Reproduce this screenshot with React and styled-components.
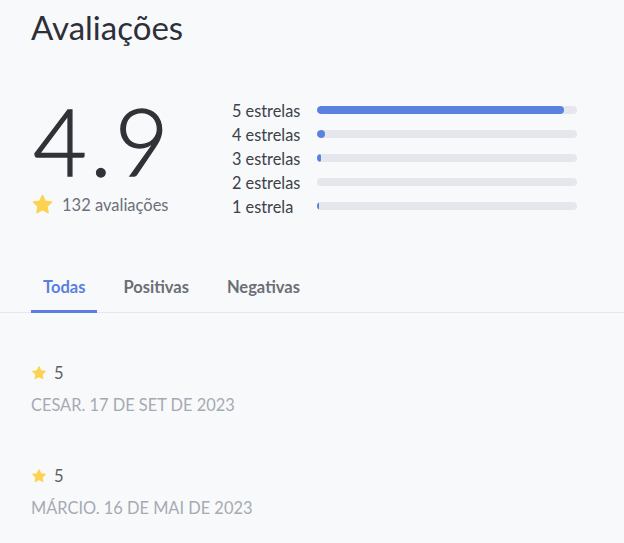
import React, { useState } from "react"
import styled, { createGlobalStyle } from "styled-components"

const GlobalStyle = createGlobalStyle`
  html, body {
    margin: 0;
    padding: 0;
    background: #f8f9fb;
  }
  body {
    font-family: "Lato", "Liberation Sans", sans-serif;
    color: #2f3237;
  }
`

const Page = styled.div`
  width: 624px;
  min-height: 543px;
  padding-top: 8px;
  box-sizing: border-box;
  overflow: hidden;
`

const Title = styled.h1`
  margin: 0 0 0 31px;
  font-size: 33px;
  font-weight: 400;
  line-height: 1.2;
  color: #2c3038;
`

const Summary = styled.section`
  display: flex;
  margin: 46px 0 0 31px;
`

const ScoreColumn = styled.div`
  width: 201px;
  display: flex;
  flex-direction: column;
`

const Score = styled.div`
  padding-left: 2px;
  font-size: 93px;
  line-height: 1;
  font-weight: 300;
  color: #2f3237;
  -webkit-text-stroke: 1.3px #2f3237;
  letter-spacing: 3px;
`

const CountRow = styled.div`
  display: flex;
  align-items: center;
  gap: 8px;
  margin-top: 8px;
  height: 20px;
  line-height: 20px;
  font-size: 16.5px;
  color: #6b7079;
`

const Bars = styled.div`
  padding-top: 4px;
  display: flex;
  flex-direction: column;
`

const BarRow = styled.div`
  display: grid;
  grid-template-columns: 85px 260px;
  align-items: center;
  height: 24px;
`

const BarLabel = styled.span`
  font-size: 16.3px;
  line-height: 24px;
  padding-top: 1px;
  color: #3d4148;
`

const Track = styled.div`
  height: 8px;
  border-radius: 4px;
  background: #e5e7ec;
  overflow: hidden;
`

const Fill = styled.div`
  height: 100%;
  border-radius: 4px;
  background: #5a80e0;
`

const TabBar = styled.nav`
  display: flex;
  gap: 14px;
  margin-top: 46px;
  padding-left: 31px;
  border-bottom: 1px solid #e3e6ed;
`

const Tab = styled.button`
  border: none;
  background: none;
  padding: 13px 12px 13px;
  font-family: inherit;
  font-size: 16.5px;
  line-height: 20px;
  font-weight: 700;
  cursor: pointer;
  color: ${(p) => (p.$active ? "#5b7fe0" : "#6b6e75")};
  border-bottom: 3px solid ${(p) => (p.$active ? "#5b7fe0" : "transparent")};
  margin-bottom: -1px;
`

const Review = styled.article`
  padding: 50px 0 0 31px;
  & + & {
    padding-top: 51px;
  }
`

const RatingRow = styled.div`
  display: flex;
  align-items: center;
  gap: 7px;
  height: 20px;
  font-size: 16.5px;
  color: #5c6068;
`

const Meta = styled.div`
  margin-top: 12px;
  height: 20px;
  line-height: 20px;
  font-size: 16.4px;
  text-transform: uppercase;
  color: #a6aab2;
`

const Star = ({ size = 20 }) => (
  <svg width={size} height={size} viewBox="0 0 24 24">
    <path
      d="M12 2.6l2.9 6 6.5.8-4.8 4.5 1.2 6.5L12 17.3l-5.8 3.1 1.2-6.5L2.6 9.4l6.5-.8z"
      fill="#fcd250"
      stroke="#fcd250"
      strokeWidth="1.6"
      strokeLinejoin="round"
    />
  </svg>
)

const distribution = [
  { label: "5 estrelas", pct: 95 },
  { label: "4 estrelas", pct: 3 },
  { label: "3 estrelas", pct: 1.5 },
  { label: "2 estrelas", pct: 0 },
  { label: "1 estrela", pct: 0.8 },
]

const reviews = [
  { rating: 5, meta: "Cesar. 17 de set de 2023" },
  { rating: 5, meta: "Márcio. 16 de mai de 2023" },
]

export default function App() {
  const [tab, setTab] = useState("Todas")
  return (
    <Page>
      <GlobalStyle />
      <Title>Avaliações</Title>
      <Summary>
        <ScoreColumn>
          <Score>4.9</Score>
          <CountRow>
            <Star size={23} />
            <span>132 avaliações</span>
          </CountRow>
        </ScoreColumn>
        <Bars>
          {distribution.map((d) => (
            <BarRow key={d.label}>
              <BarLabel>{d.label}</BarLabel>
              <Track>
                {d.pct > 0 && <Fill style={{ width: `${d.pct}%` }} />}
              </Track>
            </BarRow>
          ))}
        </Bars>
      </Summary>
      <TabBar>
        {["Todas", "Positivas", "Negativas"].map((t) => (
          <Tab key={t} $active={tab === t} onClick={() => setTab(t)}>
            {t}
          </Tab>
        ))}
      </TabBar>
      {reviews.map((r) => (
        <Review key={r.meta}>
          <RatingRow>
            <Star size={16} />
            <span>{r.rating}</span>
          </RatingRow>
          <Meta>{r.meta}</Meta>
        </Review>
      ))}
    </Page>
  )
}
